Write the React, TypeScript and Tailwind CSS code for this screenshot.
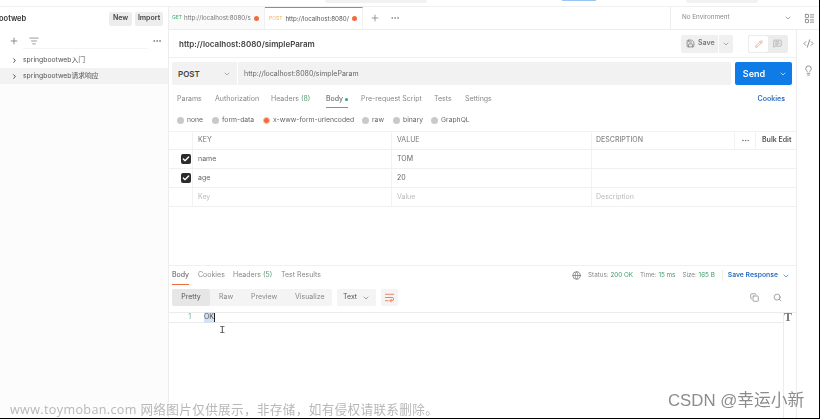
import React from 'react';
import { ChevronDown, ChevronRight, Plus, Ellipsis, Save, Pencil, MessageSquareText, CodeXml, Lightbulb, Globe, Copy, Search, Check, ListFilter, WrapText, LayoutList } from 'lucide-react';

const font = { fontFamily: 'Inter, "Noto Sans CJK SC", sans-serif' };

const reqTabs = [
  { label: 'Params', w: 'w-[38px]' },
  { label: 'Authorization', w: 'w-[56px]' },
  { label: 'Headers', count: '(8)', w: 'w-[55px]' },
  { label: 'Body', w: 'w-[35px]', active: true },
  { label: 'Pre-request Script', w: 'w-[73px]' },
  { label: 'Tests', w: 'w-[31px]' },
  { label: 'Settings', w: 'w-[40px]' },
];

const bodyTypes = [
  { label: 'none', w: 'w-[35px]' },
  { label: 'form-data', w: 'w-[51px]' },
  { label: 'x-www-form-urlencoded', w: 'w-[99px]', on: true },
  { label: 'raw', w: 'w-[31px]' },
  { label: 'binary', w: 'w-[38px]' },
  { label: 'GraphQL', w: 'w-[50px]' },
];

const rows = [
  { k: 'name', v: 'TOM', on: true },
  { k: 'age', v: '20', on: true },
  { k: 'Key', v: 'Value', d: 'Description', on: false },
];

function Sidebar() {
  return (
    <aside className="w-[169px] shrink-0 border-r border-[#ededed] bg-[#fcfcfc] flex flex-col">
      <div className="h-[23px] flex items-center justify-between pr-[5px] bg-white">
        <span className="text-[7.5px] font-semibold text-[#333] -ml-[1px]">ootweb</span>
        <div className="flex gap-[3px]">
          <div className="w-[23px] h-[14px] bg-[#ededed] rounded-[2px] text-[7px] font-semibold text-[#444] flex items-center justify-center">New</div>
          <div className="w-[28px] h-[14px] bg-[#ededed] rounded-[2px] text-[7px] font-semibold text-[#444] flex items-center justify-center">Import</div>
        </div>
      </div>
      <div className="h-[22px] flex items-center pl-[9px] pr-[6px] bg-white">
        <Plus className="w-[10px] h-[10px] text-[#777]" />
        <div className="ml-[4px] flex-1 h-[16px] border-b border-[#f4f4f4] flex items-center pl-[6px]">
          <ListFilter className="w-[10px] h-[10px] text-[#888]" />
        </div>
        <Ellipsis className="ml-[4px] w-[10px] h-[10px] text-[#777]" />
      </div>
      <div className="h-[16px] flex items-center pl-[11px] gap-[5px] text-[6.8px] text-[#555] bg-white">
        <ChevronRight className="w-[7px] h-[7px] text-[#333]" strokeWidth={3} />
        <span>springbootweb入门</span>
      </div>
      <div className="h-[16px] flex items-center pl-[11px] gap-[5px] text-[6.8px] text-[#555] bg-[#f2f2f2]">
        <ChevronRight className="w-[7px] h-[7px] text-[#333]" strokeWidth={3} />
        <span>springbootweb请求响应</span>
      </div>
    </aside>
  );
}

function TabBar() {
  return (
    <div className="h-[23px] flex items-stretch border-b border-[#ededed]">
      <div className="w-[96px] flex items-center pl-[3px] gap-[2px] border-r border-[#f0f0f0] bg-[#fafafa] text-[6.2px] text-[#777] whitespace-nowrap">
        <span className="text-[5px] text-[#3aa76d]">GET</span>
        <span>http://localhost:8080/s</span>
        <span className="w-[5px] h-[5px] rounded-full bg-[#f26b3a] shrink-0 ml-[1px]" />
      </div>
      <div className="w-[98px] flex items-center pl-[4px] gap-[3px] border-t border-[#f26b3a] border-r border-r-[#f0f0f0] bg-white text-[6.2px] text-[#555] whitespace-nowrap">
        <span className="text-[5px] text-[#e5b567]">POST</span>
        <span>http://localhost:8080/</span>
        <span className="w-[5px] h-[5px] rounded-full bg-[#f26b3a] shrink-0" />
      </div>
      <div className="w-[307px] flex items-center pl-[7px] gap-[10px]">
        <Plus className="w-[10px] h-[10px] text-[#888]" />
        <Ellipsis className="w-[10px] h-[10px] text-[#888]" />
      </div>
      <div className="flex-1 border-l border-[#ededed] flex items-center pl-[11px] pr-[4px] text-[6.3px] text-[#888]">
        <span>No Environment</span>
        <ChevronDown className="ml-auto w-[8px] h-[8px] text-[#777]" />
        <LayoutList className="ml-[12px] w-[11px] h-[11px] text-[#888]" />
      </div>
    </div>
  );
}

function RequestHeader() {
  return (
    <div className="h-[28px] flex items-center pl-[10px] pr-[8px] border-b border-[#f0f0f0]">
      <span className="text-[8px] font-semibold text-[#444]">http://localhost:8080/simpleParam</span>
      <div className="ml-auto flex items-center">
        <div className="w-[37px] h-[18px] bg-[#f0f0f0] rounded-l-[2px] flex items-center pl-[5px] gap-[3px] text-[7px] font-semibold text-[#777]">
          <Save className="w-[9px] h-[9px]" />
          <span>Save</span>
        </div>
        <div className="w-[14px] h-[18px] ml-[1px] bg-[#f0f0f0] rounded-r-[2px] flex items-center justify-center">
          <ChevronDown className="w-[8px] h-[8px] text-[#888]" />
        </div>
        <div className="ml-[15px] w-[40px] h-[18px] bg-[#ececec] rounded-[2px] flex items-center p-[1px]">
          <div className="w-[19px] h-[16px] bg-white rounded-[2px] flex items-center justify-center">
            <Pencil className="w-[8px] h-[8px] text-[#ef8a6e]" />
          </div>
          <div className="flex-1 flex items-center justify-center">
            <MessageSquareText className="w-[9px] h-[9px] text-[#aaa]" />
          </div>
        </div>
      </div>
    </div>
  );
}

function UrlBar() {
  return (
    <div className="h-[23px] mt-[4px] flex pl-[3px] pr-[4px] gap-[4px]">
      <div className="flex-1 bg-[#f2f2f2] rounded-[2px] flex items-center">
        <div className="w-[66px] h-full flex items-center pl-[6px] border-r border-white text-[8px] font-semibold text-[#444]">
          POST
          <ChevronDown className="ml-auto mr-[6px] w-[8px] h-[8px] text-[#888]" />
        </div>
        <span className="ml-[6px] pt-[1px] text-[7px] text-[#666]">http://localhost:8080/simpleParam</span>
      </div>
      <div className="w-[57px] bg-[#0f7be6] rounded-[2px] flex items-center text-white">
        <span className="w-[38px] text-center text-[9px] font-semibold">Send</span>
        <div className="flex-1 flex items-center justify-center">
          <ChevronDown className="w-[8px] h-[8px]" />
        </div>
      </div>
    </div>
  );
}

function ParamTable() {
  return (
    <div className="mt-[3px] text-[7px] text-[#666] border-t border-[#f2f2f2]">
      <div className="h-[18px] flex items-stretch border-b border-[#f0f0f0] text-[#777]">
        <div className="w-[24px] border-r border-[#f2f2f2]" />
        <div className="w-[199px] pl-[5px] flex items-center border-r border-[#f2f2f2]">KEY</div>
        <div className="w-[200px] pl-[5px] flex items-center border-r border-[#f2f2f2]">VALUE</div>
        <div className="w-[143px] pl-[4px] flex items-center font-medium text-[#888] border-r border-[#f2f2f2]">DESCRIPTION</div>
        <div className="w-[21px] flex items-center justify-center border-r border-[#f2f2f2]">
          <Ellipsis className="w-[9px] h-[9px] text-[#777]" />
        </div>
        <div className="flex-1 pl-[6px] flex items-center font-semibold text-[#555] whitespace-nowrap">Bulk Edit</div>
      </div>
      {rows.map((r) => (
        <div key={r.k} className={`h-[19px] flex items-stretch border-b border-[#f0f0f0] ${r.on ? '' : 'text-[#bbb]'}`}>
          <div className="w-[24px] border-r border-[#f2f2f2] flex items-center pl-[12px]">
            {r.on && (
              <div className="w-[10px] h-[10px] rounded-[2px] bg-[#2b2b2b] flex items-center justify-center">
                <Check className="w-[8px] h-[8px] text-white" strokeWidth={4} />
              </div>
            )}
          </div>
          <div className="w-[199px] pl-[5px] flex items-center border-r border-[#f2f2f2]">{r.k}</div>
          <div className="w-[200px] pl-[5px] flex items-center border-r border-[#f2f2f2]">{r.v}</div>
          <div className="flex-1 pl-[4px] flex items-center">{r.d}</div>
        </div>
      ))}
    </div>
  );
}

function ResponsePane() {
  return (
    <div className="flex-1 border-t border-[#f0f0f0] flex flex-col">
      <div className="h-[19px] flex items-center pl-[3px] pr-[6px] text-[7px] text-[#888]">
        <div className="relative w-[26px] h-full flex items-center text-[#555]">
          Body
          <span className="absolute left-0 w-[17px] h-[1px] bottom-0 bg-[#f26b3a]" />
        </div>
        <span className="w-[35px]">Cookies</span>
        <span className="w-[48px]">Headers <span className="text-[#5a9a78]">(5)</span></span>
        <span>Test Results</span>
        <Globe className="ml-auto w-[9px] h-[9px] text-[#777]" />
        <span className="ml-[7px] text-[6.3px]">Status: <span className="text-[#3a9a6b]">200 OK</span></span>
        <span className="ml-[7px] text-[6.3px]">Time: <span className="text-[#3a9a6b]">15 ms</span></span>
        <span className="ml-[7px] text-[6.3px]">Size: <span className="text-[#3a9a6b]">165 B</span></span>
        <span className="ml-[7px] h-[11px] border-l border-[#eee]" />
        <span className="ml-[5px] text-[6.8px] font-semibold text-[#2f6fc0]">Save Response</span>
        <ChevronDown className="ml-[4px] w-[8px] h-[8px] text-[#2f6fc0]" />
      </div>
      <div className="h-[17px] mt-[4px] flex items-center pl-[3px] pr-[14px] text-[7px] text-[#888]">
        <div className="w-[160px] h-full bg-[#f4f4f4] rounded-[2px] flex items-center">
          <div className="w-[38px] h-full bg-[#e6e6e6] rounded-[2px] flex items-center justify-center text-[#555]">Pretty</div>
          <span className="ml-[9px] w-[32px]">Raw</span>
          <span className="w-[44px]">Preview</span>
          <span>Visualize</span>
        </div>
        <div className="ml-[5px] w-[39px] h-full bg-[#f4f4f4] rounded-[2px] flex items-center pl-[6px] text-[#555]">
          Text
          <ChevronDown className="ml-auto mr-[6px] w-[8px] h-[8px] text-[#777]" />
        </div>
        <div className="ml-[5px] w-[17px] h-full bg-[#f4f4f4] rounded-[2px] flex items-center justify-center">
          <WrapText className="w-[11px] h-[11px] text-[#ef7a50]" />
        </div>
        <Copy className="ml-auto w-[9px] h-[9px] text-[#888]" />
        <Search className="ml-[14px] w-[9px] h-[9px] text-[#888]" />
      </div>
      <div className="flex-1 mt-[6px] border-t border-[#ececec] flex">
        <div className="flex-1 border-r border-[#ececec]">
          <div className="h-[10px] border-b border-[#ececec] flex items-center text-[7px]">
            <span className="w-[22px] text-right text-[#7aa0a8]">1</span>
            <span className="ml-[13px] bg-[#d6e2f2] text-[#555]">OK</span>
            <span className="w-[1px] h-[9px] bg-[#222]" />
          </div>
        </div>
        <div className="w-[12px] flex">
          <span className="-mt-[2px] text-[12px] leading-[12px] font-bold text-[#777]" style={{ fontFamily: '"Liberation Serif", serif' }}>T</span>
        </div>
      </div>
    </div>
  );
}

export default function App() {
  return (
    <div className="relative w-[820px] h-[419px] bg-white overflow-hidden border-r border-b border-black" style={font}>
      <div className="flex flex-col h-full blur-[0.5px]">
        <div className="h-[7px] shrink-0 flex border-b border-[#f0f0f0]">
          <div className="ml-[325px] w-[102px] h-[3px] bg-[#f2f2f2] rounded-b-[2px]" />
          <div className="ml-[135px] w-[34px] h-[1px] bg-[#9cc6f2]" />
          <div className="ml-[90px] w-[72px] h-[3px] bg-[#f2f2f2] rounded-b-[2px]" />
        </div>
        <div className="flex flex-1 min-h-0">
          <Sidebar />
          <main className="flex-1 flex flex-col min-w-0">
            <TabBar />
            <div className="flex flex-1 min-h-0">
              <div className="w-[628px] flex flex-col border-r border-[#ededed]">
                <RequestHeader />
                <UrlBar />
                <div className="h-[27px] flex items-center pt-[1px] pl-[8px] pr-[11px] text-[7px] text-[#888] whitespace-nowrap">
                  {reqTabs.map((t) => (
                    <div key={t.label} className={`${t.w} relative h-full flex items-center ${t.active ? 'text-[#555]' : ''}`}>
                      {t.label}
                      {t.count && <span className="ml-[2px] text-[#5a9a78]">{t.count}</span>}
                      {t.active && <span className="ml-[2px] w-[3px] h-[3px] rounded-full bg-[#2fa56a]" />}
                      {t.active && <span className="absolute left-0 bottom-[4px] w-[22px] h-[1px] bg-[#f26b3a]" />}
                    </div>
                  ))}
                  <span className="ml-auto font-semibold text-[#2f6fc0]">Cookies</span>
                </div>
                <div className="h-[16px] flex items-center pl-[8px] text-[6.8px] text-[#666] whitespace-nowrap">
                  {bodyTypes.map((b) => (
                    <div key={b.label} className={`${b.w} flex items-center gap-[3px]`}>
                      <span className={`w-[7px] h-[7px] rounded-full ${b.on ? 'bg-[#f26b3a] border border-[#f5c0a8]' : 'bg-[#c9c9c9]'}`} />
                      {b.label}
                    </div>
                  ))}
                </div>
                <ParamTable />
                <div className="h-[58px] shrink-0" />
                <ResponsePane />
              </div>
              <div className="flex-1 flex flex-col items-center pt-[8px] gap-[16px] text-[#888]">
                <CodeXml className="w-[11px] h-[11px]" />
                <Lightbulb className="w-[11px] h-[11px]" />
              </div>
            </div>
          </main>
        </div>
      </div>
      <span className="absolute left-[219px] top-[324px] text-[#555] text-[11px] leading-[12px]" style={{ fontFamily: '"Liberation Mono", monospace' }}>I</span>
      <div className="absolute left-[10px] top-[402px] text-[12.6px] leading-[16px] text-[#b8b8b8] tracking-[0.35px] whitespace-nowrap" style={{ fontFamily: '"Open Sans", "Noto Sans CJK SC", sans-serif' }}>
        www.toymoban.com 网络图片仅供展示，非存储，如有侵权请联系删除。
      </div>
      <div className="absolute left-[668px] top-[391px] text-[16.8px] leading-[20px] text-[#8c8c8c] whitespace-nowrap" style={{ fontFamily: '"Liberation Sans", "Noto Sans CJK SC", sans-serif' }}>
        CSDN @幸运小新
      </div>
    </div>
  );
}
